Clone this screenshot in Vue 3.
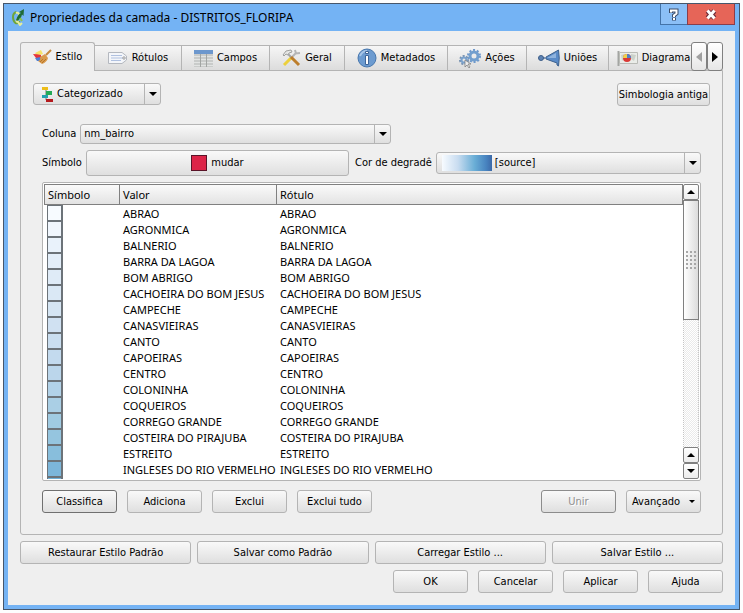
<script setup>
import { ref } from 'vue'

const tabs = [
  { id: 'estilo', label: 'Estilo', width: 75 },
  { id: 'rotulos', label: 'Rótulos', width: 87 },
  { id: 'campos', label: 'Campos', width: 88 },
  { id: 'geral', label: 'Geral', width: 75 },
  { id: 'metadados', label: 'Metadados', width: 103 },
  { id: 'acoes', label: 'Ações', width: 79 },
  { id: 'unioes', label: 'Uniões', width: 82 },
  { id: 'diagramas', label: 'Diagrama', width: 90 },
]
const active = ref('estilo')
const renderer = ref('Categorizado')
const column = ref('nm_bairro')
const ramp = ref('[source]')

const rows = [
  ['ABRAO', '#f7fbff'],
  ['AGRONMICA', '#f0f6fd'],
  ['BALNERIO', '#e9f2fb'],
  ['BARRA DA LAGOA', '#e3eef9'],
  ['BOM ABRIGO', '#dfebf7'],
  ['CACHOEIRA DO BOM JESUS', '#dae8f5'],
  ['CAMPECHE', '#d5e5f3'],
  ['CANASVIEIRAS', '#d0e1f2'],
  ['CANTO', '#cadef0'],
  ['CAPOEIRAS', '#c3daee'],
  ['CENTRO', '#bbd6eb'],
  ['COLONINHA', '#b2d2e8'],
  ['COQUEIROS', '#aacfe5'],
  ['CORREGO GRANDE', '#a0cbe2'],
  ['COSTEIRA DO PIRAJUBA', '#95c5df'],
  ['ESTREITO', '#88bedc'],
  ['INGLESES DO RIO VERMELHO', '#7cb6da'],
  ['', '#6fb0d7'],
]
</script>

<template>
  <main class="window">
    <header class="titlebar">
      <svg class="logo" viewBox="0 0 12 17" aria-hidden="true">
        <path d="M4.500 3 Q1 4 1 8 Q1 12 3.500 14 Q6 15 7.500 12" fill="none" stroke="#6fa53a" stroke-width="2" />
        <path d="M4 4 Q7 3 7 6 Q7 9 5 11 Q4 13 6 13 L8 16 L10 14" fill="none" stroke="#e6ee9a" stroke-width="2" />
        <path d="M4 11 Q6 5 9 4 L7 3 L12 0 L11.500 7 L10 5.500 Q9 10 5 12Z" fill="#1f6b35" />
        <path d="M8 9 L10 12" stroke="#8cc04b" stroke-width="2" />
      </svg>
      <h1>Propriedades da camada - DISTRITOS_FLORIPA</h1>
      <div class="caption">
        <button type="button" class="help" aria-label="Ajuda da janela">
          <svg viewBox="0 0 10 13" width="10" height="13">
            <path d="M2 5 V2.500 H7.500 V5.500 L5 7.500 V9.500 M5 10 V12.500" fill="none" stroke="#3c4c68" stroke-width="4" />
            <path d="M2 4.500 V2.500 H7.500 V5.500 L5 7.500 V9 M5 10 V12" fill="none" stroke="#fff" stroke-width="2" />
          </svg>
        </button>
        <button type="button" class="close" aria-label="Fechar">
          <svg viewBox="0 0 12 11" width="12" height="11">
            <path d="M2.500 2 L9.500 9 M9.500 2 L2.500 9" stroke="#6b2b3a" stroke-width="5" />
            <path d="M2.500 1.500 L9.500 9.500 M9.500 1.500 L2.500 9.500" stroke="#fff" stroke-width="3" />
          </svg>
        </button>
      </div>
    </header>

    <div class="body">
      <div class="tabbar">
        <div class="tabs" role="tablist">
          <button
            v-for="t in tabs"
            :key="t.id"
            type="button"
            role="tab"
            class="tab"
            :class="{ active: active === t.id }"
            :aria-selected="active === t.id"
            :style="{ width: t.width + 'px' }"
            @click="active = t.id"
          >
            <svg v-if="t.id === 'estilo'" width="19" height="16" viewBox="0 0 19 16">
              <path d="M2 4 L8 1 L10 5 L4 7Z" fill="#f5e36a" />
              <path d="M0 5 Q4 5 8 6 L8 10 L3 9Z" fill="#e5343c" />
              <path d="M2 9 L8 8 L9 12 L4 12Z" fill="#4e7fd6" />
              <path d="M7 8 L12 5 L15 9 Q14 13 9 15 L5 12 Q8 11 7 8Z" fill="#d99a4c" />
              <path d="M7 13 L10 10 M9 14 L13 10" stroke="#b5762b" />
              <path d="M13 6 L18 1" stroke="#c58a3e" stroke-width="2" />
            </svg>
            <svg v-else-if="t.id === 'rotulos'" width="20" height="14" viewBox="0 0 20 14">
              <path d="M.500 1.500 H14 L18.500 5 V9 L14 12.500 H.500Z" fill="#f4f6fa" stroke="#b4b8bf" />
              <path d="M3 4.500h11M3 7h12M3 9.500h10" stroke="#b0c1e0" />
              <circle cx="16" cy="7" r="1.200" fill="#fff" stroke="#999" />
            </svg>
            <svg v-else-if="t.id === 'campos'" width="19" height="17" viewBox="0 0 19 17">
              <path d="M0 0h19v17h-19z" fill="#c9cbca" />
              <path d="M0 0h19v4h-19z" fill="#6c97cd" />
              <path d="M0 6.500h19M0 9.500h19M0 12.500h19M0 15.500h19" stroke="#e2e4e3" />
              <path d="M6.500 4v13M12.500 4v13" stroke="#a2a5a3" />
            </svg>
            <svg v-else-if="t.id === 'geral'" width="19" height="18" viewBox="0 0 19 18">
              <path d="M2 16 L9 9" stroke="#ecd03c" stroke-width="3" />
              <path d="M9 9 L14 4 M13 1 L14 4.500 L18 4" fill="none" stroke="#b4b5b6" stroke-width="2" />
              <path d="M6 5 L10 9" stroke="#a5a6a5" stroke-width="2" />
              <path d="M9 8 L17 16" stroke="#bd7e2c" stroke-width="3" />
              <path d="M1 6 L4 2 L9 1 L10 3 L7 4 L6 6 L4 5 L2 7Z" fill="#e6e7e6" stroke="#a0a1a0" />
            </svg>
            <svg v-else-if="t.id === 'metadados'" width="20" height="20" viewBox="0 0 20 20">
              <circle cx="10" cy="10" r="9" fill="#6c9bd0" stroke="#4676ad" />
              <path d="M3 8 Q5 3 10 3" fill="none" stroke="#a7c5e7" stroke-width="2" />
              <path d="M8.500 3.500h3v2h-3zM8.500 7.500h3v9h-3z" fill="#fff" stroke="#3f6597" />
            </svg>
            <svg v-else-if="t.id === 'acoes'" width="22" height="19" viewBox="0 0 22 19">
              <circle cx="15" cy="7" r="6" fill="none" stroke="#6d98cc" stroke-width="2" stroke-dasharray="2 1.800" />
              <circle cx="15" cy="7" r="4" fill="none" stroke="#739fce" stroke-width="3" />
              <circle cx="5" cy="11" r="4" fill="none" stroke="#7792b1" stroke-width="2" stroke-dasharray="2 1.400" />
              <circle cx="5" cy="11" r="2.500" fill="none" stroke="#7aa2cd" stroke-width="2" />
              <path d="M6 11v7l2-2 2 3 1-1-2-3h3z" fill="#eee" stroke="#777" stroke-width=".7" />
            </svg>
            <svg v-else-if="t.id === 'unioes'" width="22" height="18" viewBox="0 0 22 18">
              <path d="M20.500 1 Q22 9 20.500 17 L19 16 V14 L8 10 V8 L17 3 Z" fill="#5a8bc7" stroke="#3d618e" />
              <path d="M9 9 L18 4 V9Z" fill="#8fb3dd" />
              <path d="M5 9h3" stroke="#7d93b0" stroke-width="2" />
              <circle cx="3" cy="9" r="2.500" fill="#5d83b4" stroke="#3d5d87" />
            </svg>
            <svg v-else width="21" height="15" viewBox="0 0 21 15">
              <path d="M1.500 0v15" stroke="#a3a5a2" stroke-width="2" />
              <path d="M2.500 1.500h18v11h-18z" fill="#eaece8" stroke="#b9bbb6" />
              <path d="M4 4l3-1 1 3-3 4zM14 3l5 1-2 6-3-2z" fill="#ccd2ca" />
              <circle cx="10" cy="7" r="4" fill="#da3935" />
              <path d="M10 7V3a4 4 0 0 1 4 4z" fill="#557fc4" />
              <path d="M10 7h-4a4 4 0 0 1 4-4z" fill="#efd14a" />
            </svg>
            <span>{{ t.label }}</span>
          </button>
        </div>
        <div class="tabnav">
          <button type="button" aria-label="Abas anteriores" disabled>
            <svg width="6" height="10" viewBox="0 0 6 10"><path d="M6 0v10L0 5z" fill="#a0a0a0" /></svg>
          </button>
          <button type="button" aria-label="Próximas abas">
            <svg width="6" height="10" viewBox="0 0 6 10"><path d="M0 0v10l6-5z" fill="#000" /></svg>
          </button>
        </div>
      </div>

      <section class="panel" role="tabpanel">
        <div class="renderer">
          <div class="combo combo-renderer">
            <select v-model="renderer" aria-label="Tipo de simbologia">
              <option>Categorizado</option>
            </select>
            <svg class="combo-icon" width="11" height="15" viewBox="0 0 11 15">
              <path d="M4 2v11M1 2h3M4 13h3M4 5h3M2 9h3" stroke="#777" />
              <path d="M0 0h6v3h-6z" fill="#edbd19" />
              <path d="M4 4h6v4h-6z" fill="#24aa55" />
              <path d="M0 8h6v3h-6z" fill="#22a1ae" />
              <path d="M4 12h7v3h-7z" fill="#b51a1e" />
            </svg>
            <span class="arrow"></span>
          </div>
          <button type="button" class="btn old">Simbologia antiga</button>
        </div>

        <div class="content">
          <div class="field">
            <label for="column">Coluna</label>
            <div class="combo combo-column">
              <select id="column" v-model="column">
                <option>nm_bairro</option>
              </select>
              <span class="arrow"></span>
            </div>
          </div>

          <div class="pair">
            <div class="field">
              <label for="symbol">Símbolo</label>
              <button id="symbol" type="button" class="btn symbol"><i class="red"></i>mudar</button>
            </div>
            <div class="field">
              <label for="ramp">Cor de degradê</label>
              <div class="combo combo-ramp">
                <select id="ramp" v-model="ramp">
                  <option>[source]</option>
                </select>
                <i class="gradient"></i>
                <span class="arrow"></span>
              </div>
            </div>
          </div>

          <div class="list">
            <div class="view">
              <table>
                <colgroup>
                  <col class="c-symbol" />
                  <col class="c-value" />
                  <col />
                </colgroup>
                <thead>
                  <tr>
                    <th>Símbolo</th>
                    <th>Valor</th>
                    <th>Rótulo</th>
                  </tr>
                </thead>
                <tbody>
                  <tr v-for="[name, color] in rows" :key="name">
                    <td class="cell-swatch"><i class="swatch" :style="{ background: color }"></i></td>
                    <td>{{ name }}</td>
                    <td>{{ name }}</td>
                  </tr>
                </tbody>
              </table>
            </div>
            <div class="scroll">
              <button type="button" aria-label="Rolar para cima"><i class="up"></i></button>
              <div class="thumb"><i class="grip"></i></div>
              <div class="track"></div>
              <button type="button" aria-label="Linha acima"><i class="up"></i></button>
              <button type="button" aria-label="Linha abaixo"><i class="down"></i></button>
            </div>
          </div>

          <div class="actions">
            <button type="button" class="btn small focus">Classifica</button>
            <button type="button" class="btn small">Adiciona</button>
            <button type="button" class="btn small">Exclui</button>
            <button type="button" class="btn small">Exclui tudo</button>
            <span class="spacer"></span>
            <button type="button" class="btn small off" disabled>Unir</button>
            <button type="button" class="btn small menu">Avançado<i class="down"></i></button>
          </div>
        </div>
      </section>

      <div class="styles">
        <button type="button" class="btn">Restaurar Estilo Padrão</button>
        <button type="button" class="btn">Salvar como Padrão</button>
        <button type="button" class="btn">Carregar Estilo ...</button>
        <button type="button" class="btn">Salvar Estilo ...</button>
      </div>
      <footer class="footer">
        <button type="button" class="btn small">OK</button>
        <button type="button" class="btn small">Cancelar</button>
        <button type="button" class="btn small">Aplicar</button>
        <button type="button" class="btn small">Ajuda</button>
      </footer>
    </div>
  </main>
</template>

<style>
body {
  background: #fdfdfd;
}
</style>

<style scoped>
* {
  box-sizing: border-box;
}
.window {
  display: flex;
  flex-direction: column;
  height: calc(100vh - 6px);
  min-height: 480px;
  margin: 3px;
  padding: 0 4px 4px;
  background: #74b3f4;
  border: 1px solid #46566b;
  font-family: 'DejaVu Sans Condensed', 'DejaVu Sans', sans-serif;
  font-size: 11px;
  line-height: 16px;
  color: #000;
}
button,
select {
  font: inherit;
  color: inherit;
  margin: 0;
  padding: 0;
}
i {
  display: block;
}
svg {
  display: block;
  flex: none;
}
.titlebar {
  display: flex;
  align-items: center;
  flex: none;
  height: 27px;
  padding-left: 4px;
}
.logo {
  width: 12px;
  height: 17px;
}
h1 {
  flex: 1;
  margin: 0;
  padding-left: 6px;
  font: 400 12px/18px 'Noto Sans', sans-serif;
  white-space: nowrap;
}
.caption {
  display: flex;
  align-self: flex-start;
}
.caption button {
  display: flex;
  align-items: center;
  justify-content: center;
  height: 21px;
  border: 1px solid #4373a8;
  border-top: 0;
}
.caption .help {
  width: 27px;
  background: #8bbff6;
  border-right: 0;
}
.caption .close {
  width: 48px;
  background: #e66558;
  border-color: #8a3d4a;
}
.body {
  display: flex;
  flex-direction: column;
  flex: 1;
  min-height: 0;
  padding: 11px 12px 12px;
  background: #efefef;
}
.tabbar {
  display: flex;
  flex: none;
  height: 29px;
  margin-bottom: -1px;
  z-index: 1;
}
.tabs {
  display: flex;
  align-items: flex-start;
  flex: 1;
  min-width: 0;
  overflow: hidden;
}
.tab {
  display: flex;
  align-items: center;
  justify-content: center;
  flex: none;
  gap: 4px;
  height: 26px;
  margin-top: 3px;
  background: linear-gradient(#f6f6f6, #dcdcdc);
  border: solid #b4b4b4;
  border-width: 1px 1px 1px 0;
  white-space: nowrap;
}
.tab.active {
  height: 29px;
  margin-top: 0;
  background: #efefef;
  border-width: 1px 1px 0;
  border-radius: 3px 3px 0 0;
}
.tabnav {
  display: flex;
  flex: none;
}
.tabnav button {
  display: flex;
  align-items: center;
  justify-content: center;
  width: 16px;
  height: 29px;
  background: linear-gradient(#fff, #e6e6e6);
  border: 1px solid #808080;
  border-radius: 3px;
}
.panel {
  display: flex;
  flex-direction: column;
  flex: 1;
  min-height: 0;
  padding: 12px;
  border: 1px solid #b4b4b4;
  border-radius: 0 0 3px 3px;
}
.renderer {
  display: flex;
  justify-content: space-between;
  flex: none;
}
.btn {
  display: flex;
  align-items: center;
  justify-content: center;
  height: 23px;
  background: linear-gradient(#f9f9f9, #dfdfdf);
  border: 1px solid #b4b4b4;
  border-radius: 3px;
  white-space: nowrap;
}
.btn.old {
  width: 93px;
}
.btn.small {
  width: 75px;
}
.btn.focus {
  border-color: #707070;
}
.btn.off {
  color: #909090;
  border-color: #8c8c8c;
  text-shadow: 1px 1px #fff;
}
.btn.menu {
  gap: 9px;
}
.btn.menu .down {
  border-width: 3px 3px 0;
}
.combo {
  display: grid;
  grid-template-columns: auto 1fr 16px;
  align-items: center;
  height: 22px;
  background: linear-gradient(#f9f9f9, #dfdfdf);
  border: 1px solid #b4b4b4;
  border-radius: 3px;
}
.combo select {
  grid-area: 1 / 1 / 2 / 4;
  width: 100%;
  height: 100%;
  padding-left: 3px;
  appearance: none;
  background: none;
  border: 0;
}
.combo-renderer {
  width: 128px;
}
.combo .combo-icon {
  grid-area: 1 / 1;
  margin-left: 8px;
  pointer-events: none;
}
.combo-renderer select {
  padding-left: 23px;
}
.arrow {
  display: flex;
  align-items: center;
  justify-content: center;
  grid-area: 1 / 3;
  height: 100%;
  border-left: 1px solid #b4b4b4;
  pointer-events: none;
}
.arrow::after,
.down {
  content: '';
  border: solid transparent;
  border-width: 4px 4px 0;
  border-top-color: #000;
}
.up {
  border: solid transparent;
  border-width: 0 4px 4px;
  border-bottom-color: #000;
}
.content {
  display: flex;
  flex-direction: column;
  flex: 1;
  min-height: 0;
  padding: 18px 9px 9px;
}
.field {
  display: flex;
  align-items: center;
  gap: 4px;
}
.field label {
  white-space: nowrap;
}
.combo-column {
  width: 311px;
  height: 20px;
}
.pair {
  display: grid;
  grid-template-columns: 307px 1fr;
  gap: 6px;
  flex: none;
  margin: 6px 0;
}
.symbol {
  flex: 1;
  gap: 4px;
  height: 26px;
}
.red {
  width: 16px;
  height: 16px;
  background: #dc2448;
  border: 1px solid #5a1428;
}
.combo-ramp {
  flex: 1;
}
.combo-ramp select {
  padding-left: 58px;
}
.gradient {
  grid-area: 1 / 1;
  width: 50px;
  height: 16px;
  margin-left: 5px;
  background: linear-gradient(90deg, #f7fbff, #c8dcf0 32%, #6aaed6 65%, #4884c0 88%, #3d69a8);
  pointer-events: none;
}
.list {
  display: flex;
  flex: 1;
  min-height: 0;
  padding: 1px;
  background: #fff;
  border: 1px solid #b4b4b4;
  border-radius: 2px;
}
.view {
  flex: 1;
  min-width: 0;
  overflow: hidden;
}
table {
  width: 100%;
  table-layout: fixed;
  border-collapse: separate;
  border-spacing: 0;
  font-family: 'Noto Sans', sans-serif;
}
.c-symbol {
  width: 76px;
}
.c-value {
  width: 157px;
}
th {
  height: 21px;
  padding: 0 0 0 3px;
  background: linear-gradient(#fafafa, #e3e3e3);
  border: solid #808080;
  border-width: 1px 1px 1px 0;
  font-weight: 400;
  text-align: left;
}
th:first-child {
  border-left-width: 1px;
}
td {
  height: 16px;
  padding: 2px 0 0 3px;
  line-height: 14px;
  white-space: nowrap;
}
td.cell-swatch {
  padding-top: 0;
}
.swatch {
  width: 16px;
  height: 16px;
  border: solid #6c7379;
  border-width: 1px 2px 1px 1px;
}
.scroll {
  display: flex;
  flex-direction: column;
  width: 16px;
  flex: none;
}
.scroll button {
  display: flex;
  align-items: center;
  justify-content: center;
  flex: none;
  height: 16px;
  background: linear-gradient(#fff, #ececec);
  border: 1px solid #808080;
  border-radius: 2px;
}
.thumb {
  display: flex;
  align-items: center;
  justify-content: center;
  flex: 119 1 0;
  background: linear-gradient(90deg, #fff, #dcdcdc);
  border: 1px solid #808080;
}
.grip {
  width: 12px;
  height: 20px;
  background: radial-gradient(circle at 2px 2px, #a8a8a8 1px, transparent 1px) 0 0 / 4px 4px;
}
.track {
  flex: 128 1 0;
  background: repeating-conic-gradient(#eaeaea 0 25%, #fff 0 50%) 0 0 / 2px 2px;
  border: dotted #c4c4c4;
  border-width: 0 1px;
}
.actions {
  display: flex;
  flex: none;
  gap: 10px;
  margin-top: 9px;
}
.spacer {
  flex: 1;
}
.styles {
  display: grid;
  grid-template-columns: repeat(4, 1fr);
  gap: 6px;
  flex: none;
  margin: 6px 0;
}
.footer {
  display: flex;
  justify-content: flex-end;
  flex: none;
  gap: 10px;
}
</style>
